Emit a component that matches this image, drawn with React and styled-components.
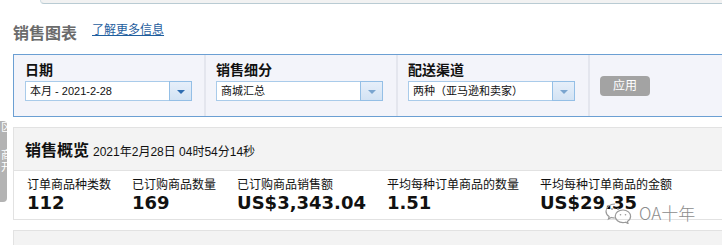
import React from "react";
import styled, { createGlobalStyle } from "styled-components";

// page styles

const GlobalStyle = createGlobalStyle`
  body {
    margin: 0;
    background: #ffffff;
    font-family: "Liberation Sans", Arial, "Noto Sans CJK SC", sans-serif;
    color: #111;
  }
`;

const Page = styled.div`
  position: relative;
  width: 722px;
  height: 245px;
  overflow: hidden;
`;

const TopStrip = styled.div`
  margin-left: 40px;
  height: 3px;
  background: #f2f2f2;
  border-bottom: 1px solid #b9cbd3;
  border-left: 1px solid #d0dde3;
  border-bottom-left-radius: 4px;
`;

const TitleRow = styled.div`
  display: flex;
  align-items: flex-start;
  padding-left: 13px;
  margin-top: 20px;
  height: 20px;
`;

const Title = styled.h1`
  margin: 0;
  font-size: 16px;
  line-height: 20px;
  font-weight: bold;
  color: #6b6b6b;
`;

const MoreLink = styled.a`
  margin-left: 15px;
  margin-top: -2px;
  font-size: 12px;
  line-height: 16px;
  color: #1f5e9e;
  text-decoration: underline;
  cursor: pointer;
`;

const FilterBar = styled.div`
  display: flex;
  margin: 10px 0 0 13px;
  width: 760px;
  height: 61px;
  background: #f3f4fa;
  border: 1px solid #6b9fd3;
  border-right: none;
`;

const FilterCol = styled.div`
  width: ${(p) => (p.$first ? 179 : 180)}px;
  padding: 6px 0 0 ${(p) => (p.$first ? 11 : 10)}px;
  border-right: 2px solid #e4e6ee;
`;

const FilterLabel = styled.div`
  font-size: 14px;
  line-height: 18px;
  font-weight: bold;
  color: #111;
`;

const Select = styled.div`
  display: flex;
  width: 167px;
  height: 20px;
  margin-top: 2px;
`;

const SelectValue = styled.div`
  flex: 1;
  box-sizing: border-box;
  background: #fff;
  border: 1px solid #a9cbea;
  border-right: none;
  padding-left: 4px;
  font-size: 11px;
  line-height: 18px;
  color: #111;
  white-space: nowrap;
  overflow: hidden;
`;

const SelectButton = styled.div`
  width: 23px;
  box-sizing: border-box;
  display: flex;
  align-items: center;
  justify-content: center;
  background: linear-gradient(#e6effa, #d3e3f4);
  border: 1px solid #94bfe6;

  &::after {
    content: "";
    border-left: 4px solid transparent;
    border-right: 4px solid transparent;
    border-top: 4px solid ${(p) => (p.$dim ? "#7aa5cf" : "#2f6db1")};
    margin-top: 2px;
  }
`;

const ApplyCol = styled.div`
  padding: 21px 0 0 10px;
`;

const ApplyButton = styled.button`
  width: 50px;
  height: 20px;
  border: none;
  border-radius: 4px;
  background: #a3a3a3;
  color: #fff;
  font-family: inherit;
  font-size: 12px;
  line-height: 20px;
  padding: 0;
`;

const Panel = styled.div`
  margin: 10px 0 0 13px;
  width: 760px;
  border: 1px solid #e2e2e2;
  border-right: none;
`;

const PanelHeader = styled.div`
  display: flex;
  align-items: center;
  gap: 4px;
  height: 42px;
  padding-left: 11px;
  background: #f3f3f3;
  border-bottom: ${(p) => (p.$open ? "1px solid #e2e2e2" : "none")};
`;

const PanelTitle = styled.span`
  font-size: 16px;
  font-weight: bold;
  color: #111;
`;

const Stamp = styled.span`
  font-size: 12px;
  color: #111;
  margin-top: 2px;
`;

const Metrics = styled.div`
  display: flex;
  gap: 21px;
  padding: 6px 0 6px 13px;
  background: #fff;
`;

const Metric = styled.div`
  display: flex;
  flex-direction: column;
`;

const MetricLabel = styled.div`
  font-size: 12px;
  line-height: 16px;
  color: #111;
`;

const MetricValue = styled.div`
  font-family: "DejaVu Sans", Verdana, sans-serif;
  font-size: 18px;
  line-height: 20px;
  font-weight: bold;
  color: #111;
`;

const SideTab = styled.div`
  position: absolute;
  left: 0;
  top: 121px;
  width: 7px;
  height: 81px;
  background: #b3b3b3;
  border-radius: 0 4px 4px 0;
  overflow: hidden;
  display: flex;
  flex-direction: column;
  align-items: flex-end;
  font-size: 11px;
  line-height: 12px;
  color: #fff;

  span {
    margin-right: -5px;
  }
`;

const Watermark = styled.div`
  position: absolute;
  left: 604px;
  top: 200px;
  display: flex;
  align-items: center;
  gap: 6px;
  color: #8c8c8c;
  font-family: "Noto Sans CJK SC", sans-serif;
  font-size: 17px;
  font-weight: 300;
  text-shadow: 0 0 2px #fff, 0 0 2px #fff;
`;

const filters = [
  { label: "日期", value: "本月 - 2021-2-28", dim: false },
  { label: "销售细分", value: "商城汇总", dim: true },
  { label: "配送渠道", value: "两种（亚马逊和卖家）", dim: true },
];

const metrics = [
  { label: "订单商品种类数", value: "112" },
  { label: "已订购商品数量", value: "169" },
  { label: "已订购商品销售额", value: "US$3,343.04" },
  { label: "平均每种订单商品的数量", value: "1.51" },
  { label: "平均每种订单商品的金额", value: "US$29.35" },
];

const WeChatMark = () => (
  <svg width="29" height="22" viewBox="0 0 29 22" fill="none" stroke="#9a9a9a" strokeWidth="1.2">
    <path d="M11 2C5.8 2 2 5.2 2 9.2c0 2.2 1.2 4.1 3.1 5.4L4.4 17l2.9-1.5c1.1.3 2.3.5 3.6.5" />
    <path d="M19 8c-4.4 0-7.8 2.8-7.8 6.3s3.4 6.3 7.8 6.3c.9 0 1.8-.1 2.6-.4l2.4 1.3-.6-2c1.9-1.2 3.2-3 3.2-5.2C26.6 10.8 23.3 8 19 8z" />
    <circle cx="8" cy="7" r="0.9" fill="#9a9a9a" stroke="none" />
    <circle cx="14" cy="7" r="0.9" fill="#9a9a9a" stroke="none" />
    <circle cx="16.5" cy="12.8" r="0.8" fill="#9a9a9a" stroke="none" />
    <circle cx="21.5" cy="12.8" r="0.8" fill="#9a9a9a" stroke="none" />
  </svg>
);

const App = () => {
  return (
    <Page>
      <GlobalStyle />
      <TopStrip />
      <TitleRow>
        <Title>销售图表</Title>
        <MoreLink>了解更多信息</MoreLink>
      </TitleRow>

      <FilterBar>
        {filters.map((f, i) => (
          <FilterCol key={f.label} $first={i === 0}>
            <FilterLabel>{f.label}</FilterLabel>
            <Select>
              <SelectValue>{f.value}</SelectValue>
              <SelectButton $dim={f.dim} />
            </Select>
          </FilterCol>
        ))}
        <ApplyCol>
          <ApplyButton type="button">应用</ApplyButton>
        </ApplyCol>
      </FilterBar>

      <Panel>
        <PanelHeader $open>
          <PanelTitle>销售概览</PanelTitle>
          <Stamp>2021年2月28日 04时54分14秒</Stamp>
        </PanelHeader>
        <Metrics>
          {metrics.map((m) => (
            <Metric key={m.label}>
              <MetricLabel>{m.label}</MetricLabel>
              <MetricValue>{m.value}</MetricValue>
            </Metric>
          ))}
        </Metrics>
      </Panel>

      <Panel>
        <PanelHeader>
          <PanelTitle>销售对比</PanelTitle>
        </PanelHeader>
      </Panel>

      <SideTab>
        <span>区</span>
        <span style={{ marginTop: 16 }}>商</span>
        <span>开</span>
      </SideTab>

      <Watermark>
        <WeChatMark />
        <span>OA十年</span>
      </Watermark>
    </Page>
  );
};

export default App;
